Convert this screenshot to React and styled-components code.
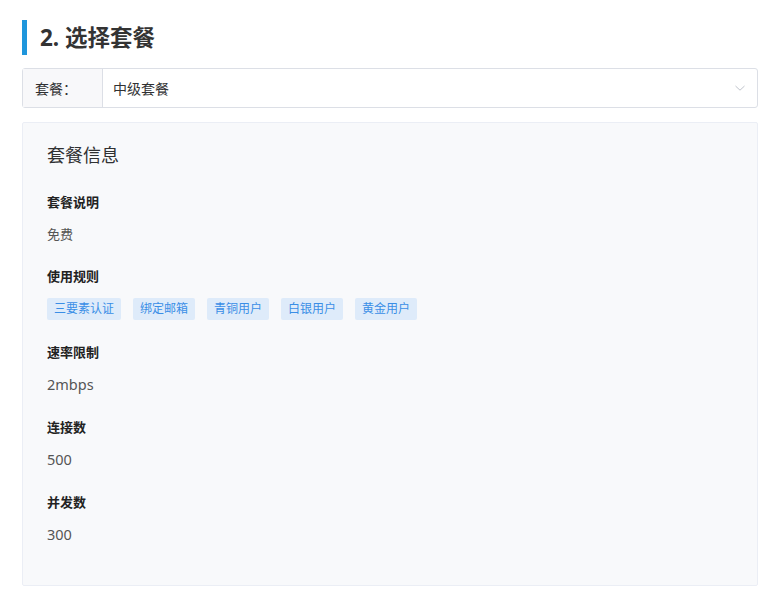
import styled, { createGlobalStyle } from "styled-components";

const GlobalStyle = createGlobalStyle`
  body {
    margin: 0;
    background: #fff;
    font-family: "Noto Sans", "Noto Sans CJK SC", sans-serif;
    color: #303133;
  }
`;

const rules = ["三要素认证", "绑定邮箱", "青铜用户", "白银用户", "黄金用户"];

const items = [
  { label: "速率限制", value: "2mbps" },
  { label: "连接数", value: "500" },
  { label: "并发数", value: "300" },
];

function Chevron() {
  return (
    <svg width="12" height="12" viewBox="0 0 12 12">
      <path d="M1.5 4 L6 8.2 L10.5 4" fill="none" stroke="#c0c4cc" strokeWidth="1" />
    </svg>
  );
}

function App() {
  return (
    <Page>
      <GlobalStyle />
      <Heading>2. 选择套餐</Heading>
      <Select>
        <SelectLabel>套餐：</SelectLabel>
        <SelectValue>
          <span>中级套餐</span>
          <Chevron />
        </SelectValue>
      </Select>
      <Panel>
        <PanelTitle>套餐信息</PanelTitle>
        <Item>
          <Label>套餐说明</Label>
          <Value small>免费</Value>
        </Item>
        <Item>
          <Label>使用规则</Label>
          <Tags>
            {rules.map((r) => (
              <Tag key={r}>{r}</Tag>
            ))}
          </Tags>
        </Item>
        {items.map((it) => (
          <Item key={it.label} wide>
            <Label>{it.label}</Label>
            <Value>{it.value}</Value>
          </Item>
        ))}
      </Panel>
    </Page>
  );
}

const Page = styled.div`
  padding: 20px 15px 0 22px;
`;

const Heading = styled.h2`
  margin: 0;
  height: 35px;
  line-height: 35px;
  border-left: 5px solid #1f96dc;
  padding-left: 13px;
  font-size: 22.5px;
  font-weight: bold;
  color: #333;
`;

const Select = styled.div`
  margin-top: 13px;
  display: flex;
  height: 38px;
  border: 1px solid #dcdfe6;
  border-radius: 3px;
  font-size: 14px;
  color: #303133;
`;

const SelectLabel = styled.div`
  width: 67px;
  padding-left: 12px;
  background: #f8f8fa;
  border-right: 1px solid #dcdfe6;
  display: flex;
  align-items: center;
`;

const SelectValue = styled.div`
  flex: 1;
  display: flex;
  align-items: center;
  justify-content: space-between;
  padding: 0 11px 0 10px;
`;

const Panel = styled.div`
  margin-top: 14px;
  background: #f8f9fb;
  border: 1px solid #ebeef5;
  border-radius: 2px;
  padding: 19px 24px 20px;
  height: 423px;
`;

const PanelTitle = styled.div`
  font-size: 18px;
  line-height: 26px;
  color: #303133;
  margin-bottom: 24px;
`;

const Item = styled.div`
  margin-bottom: ${(p) => (p.wide ? "23px" : "22px")};
`;

const Label = styled.div`
  font-size: 13px;
  font-weight: bold;
  line-height: 20px;
  color: #222;
  margin-bottom: 12px;
`;

const Value = styled.div`
  font-size: ${(p) => (p.small ? "13px" : "14.5px")};
  line-height: 20px;
  color: #555;
`;

const Tags = styled.div`
  display: flex;
  gap: 12px;
`;

const Tag = styled.span`
  height: 22px;
  line-height: 22px;
  padding: 0 7px;
  font-size: 12px;
  color: #3a8ee6;
  background: #deebfa;
  border-radius: 2px;
`;

export default App;
